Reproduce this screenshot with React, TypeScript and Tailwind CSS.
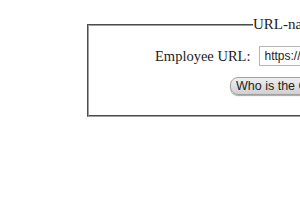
import React from "react";

export default function App() {
  return (
    <div className="w-[300px] h-[210px] overflow-hidden bg-white" style={{ fontFamily: '"Liberation Serif", serif' }}>
      <fieldset className="ml-[87px] mt-[16px] w-[420px] h-[101px] border-2 [border-style:groove] border-[#a0a0a0] text-[#222]">
        <legend className="ml-[164px] px-0 text-[15px] leading-[17px] whitespace-nowrap">URL-name</legend>
        <div className="flex items-center pl-[66px] mt-[13px]">
          <label className="text-[14.5px] leading-[20px]">Employee URL:</label>
          <input
            readOnly
            value="https://www.example.com"
            className="ml-[9px] w-[160px] h-[20px] border border-[#b5b5b5] px-[4px] text-[12px] text-[#222] bg-white outline-none"
            style={{ fontFamily: '"Liberation Sans", Arial, sans-serif' }}
          />
        </div>
        <div className="pl-[141px] mt-[7px]">
          <button
            className="h-[18px] px-[5px] rounded-[8px] border border-[#a0a0a0] bg-gradient-to-b from-[#f0f0f0] to-[#d0d0d0] text-[12.5px] leading-[16px] text-[#222] whitespace-nowrap shadow-[0_1px_1px_rgba(0,0,0,0.35)]"
            style={{ fontFamily: '"Liberation Sans", Arial, sans-serif' }}
          >
            Who is the CEO?
          </button>
        </div>
      </fieldset>
    </div>
  );
}
